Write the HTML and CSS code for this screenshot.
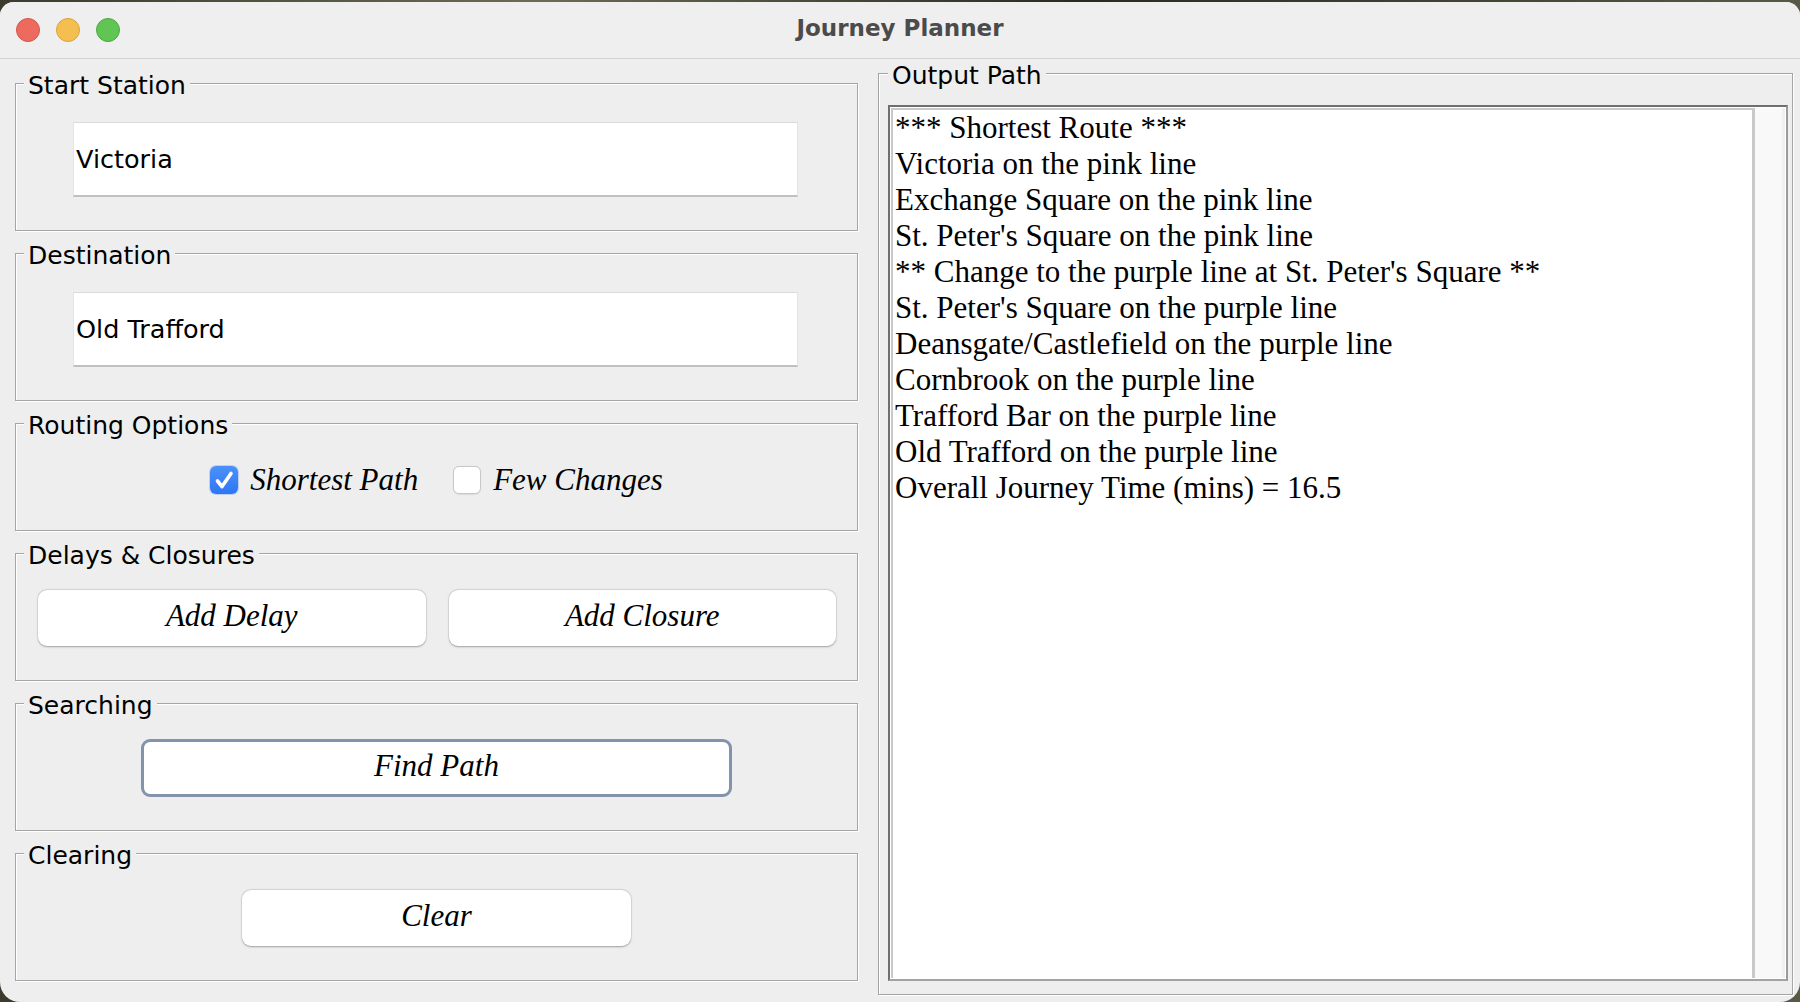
FILE: index.html
```html
<!DOCTYPE html>
<html lang="en">
<head>
<meta charset="utf-8">
<title>Journey Planner</title>
<link rel="stylesheet" href="styles.css">
</head>
<body>
<div class="window">
  <header class="titlebar">
    <div class="lights">
      <span class="light red"></span>
      <span class="light yellow"></span>
      <span class="light green"></span>
    </div>
    <div class="title">Journey Planner</div>
    <div></div>
  </header>
  <main class="content">
    <div class="left">
      <fieldset class="group">
        <legend>Start Station</legend>
        <div class="body b-input">
          <div class="field">Victoria</div>
        </div>
      </fieldset>
      <fieldset class="group">
        <legend>Destination</legend>
        <div class="body b-input">
          <div class="field">Old Trafford</div>
        </div>
      </fieldset>
      <fieldset class="group">
        <legend>Routing Options</legend>
        <div class="body b-options">
          <div class="checks">
            <label class="check">
              <span class="box checked">
                <svg viewBox="0 0 28 28" width="28" height="28"><path d="M7.5 15 L12 20.5 L21 7.5" fill="none" stroke="#fff" stroke-width="3.6" stroke-linecap="round" stroke-linejoin="round"/></svg>
              </span>
              <span class="check-label">Shortest Path</span>
            </label>
            <label class="check">
              <span class="box"></span>
              <span class="check-label">Few Changes</span>
            </label>
          </div>
        </div>
      </fieldset>
      <fieldset class="group">
        <legend>Delays &amp; Closures</legend>
        <div class="body b-delays">
          <div class="btn-grid">
            <button class="btn">Add Delay</button>
            <button class="btn">Add Closure</button>
          </div>
        </div>
      </fieldset>
      <fieldset class="group">
        <legend>Searching</legend>
        <div class="body b-search">
          <button class="btn btn-find">Find Path</button>
        </div>
      </fieldset>
      <fieldset class="group">
        <legend>Clearing</legend>
        <div class="body b-clear">
          <button class="btn btn-clear">Clear</button>
        </div>
      </fieldset>
    </div>
    <fieldset class="group g-output">
      <legend>Output Path</legend>
      <div class="body b-output">
        <div class="scroll">
          <pre class="textarea">*** Shortest Route ***
Victoria on the pink line
Exchange Square on the pink line
St. Peter's Square on the pink line
** Change to the purple line at St. Peter's Square **
St. Peter's Square on the purple line
Deansgate/Castlefield on the purple line
Cornbrook on the purple line
Trafford Bar on the purple line
Old Trafford on the purple line
Overall Journey Time (mins) = 16.5</pre>
          <div class="vbar"></div>
        </div>
      </div>
    </fieldset>
  </main>
</div>
</body>
</html>
```

FILE: styles.css
```css
html, body {
  margin: 0;
  height: 100%;
}
body {
  background: linear-gradient(90deg, #3b3a2c, #6d6a55 30%, #2b2a20 60%, #5a5846);
  overflow: hidden;
  font-family: "DejaVu Sans", sans-serif;
  color: #000;
}
.window {
  margin-top: 2px;
  height: 1000px;
  background: #eeeeee;
  border-radius: 14px 14px 20px 20px;
  overflow: hidden;
  display: flex;
  flex-direction: column;
}
.titlebar {
  height: 56px;
  flex: none;
  background: #efefef;
  border-bottom: 1px solid #d3d3d3;
  display: grid;
  grid-template-columns: 1fr auto 1fr;
  align-items: center;
}
.lights {
  display: flex;
  gap: 16px;
  padding-left: 16px;
}
.light {
  width: 24px;
  height: 24px;
  border-radius: 50%;
  box-sizing: border-box;
}
.red { background: #ed6a5e; border: 1px solid #d65549; }
.yellow { background: #f5bf4f; border: 1px solid #d9a23f; }
.green { background: #61c554; border: 1px solid #4ea843; }
.title {
  font: bold 23px "DejaVu Sans", sans-serif;
  color: #4b4b4b;
  padding-bottom: 5px;
}
.content {
  flex: 1;
  display: flex;
  gap: 20px;
  padding: 0 7px 0 15px;
}
.left {
  width: 843px;
  flex: none;
  display: flex;
  flex-direction: column;
  gap: 8px;
  padding-top: 10px;
}
.group {
  margin: 0;
  padding: 0;
  min-width: 0;
  border: 1px solid #a5a5a5;
  box-shadow: inset 1px 1px 0 #fff, 1px 1px 0 #fff;
}
.group legend {
  margin-left: 8px;
  padding: 5px 4px 0;
  font: 25px/24px "DejaVu Sans", sans-serif;
  color: #000;
  background: #eeeeee;
}
.b-input {
  padding: 24px 59px 33px 57px;
}
.field {
  height: 75px;
  box-sizing: border-box;
  background: #fff;
  border: 1px solid #e4e4e4;
  border-top-color: #dadada;
  border-bottom: 2px solid #c0c0c0;
  padding-left: 2px;
  display: flex;
  align-items: center;
  font: 25.5px "DejaVu Sans", sans-serif;
}
.b-options {
  padding: 22px 0 30px;
}
.checks {
  height: 40px;
  display: flex;
  justify-content: center;
  align-items: center;
  gap: 35px;
}
.check {
  display: flex;
  align-items: center;
  gap: 12px;
}
.box {
  width: 28px;
  height: 28px;
  box-sizing: border-box;
  border-radius: 6px;
  background: #fff;
  border: 1px solid #c8c8c8;
  box-shadow: 0 0.5px 1px rgba(0,0,0,0.08);
}
.box.checked {
  border: none;
  background: linear-gradient(#4b91fb, #2e76f3);
  box-shadow: 0 0 0 1px rgba(47,118,243,0.25);
}
.box svg { display: block; }
.check-label, .btn {
  font: italic 31px "Liberation Serif", serif;
  color: #000;
}
.b-delays {
  padding: 22px 21px 34px 22px;
}
.btn-grid {
  display: grid;
  grid-template-columns: 1fr 1fr;
  gap: 23px;
}
.btn {
  display: block;
  height: 56px;
  margin: 0;
  padding: 0 0 4px;
  background: #fff;
  border: none;
  border-radius: 9px;
  box-shadow: 0 0.5px 2px rgba(0,0,0,0.3), 0 0 0 0.5px rgba(0,0,0,0.07);
}
.b-search {
  padding: 21px 0 33px;
}
.btn-find {
  width: 591px;
  height: 58px;
  margin: 0 auto;
  border: 3px solid #8493ac;
  box-sizing: border-box;
  box-shadow: none;
}
.b-clear {
  padding: 22px 0 34px;
}
.btn-clear {
  width: 389px;
  margin: 0 auto;
}
.g-output {
  flex: 1;
  align-self: flex-start;
}
.g-output legend {
  margin-left: 9px;
}
.b-output {
  padding: 17px 4px 13px 9px;
}
.scroll {
  height: 876px;
  box-sizing: border-box;
  border: 2px solid;
  border-color: #6f6f6f #9b9b9b #a3a3a3 #6f6f6f;
  padding: 1px;
  background: #fff;
  display: flex;
}
.textarea {
  flex: 1;
  margin: 0;
  border-style: solid;
  border-color: #c9c9c9;
  border-width: 2px 3px 0 2px;
  padding: 0 0 0 2px;
  font: 31px/36.05px "Liberation Serif", serif;
  color: #000;
  white-space: pre;
  overflow: hidden;
}
.vbar {
  width: 30px;
  flex: none;
  background: #f9f9f9;
  box-shadow: inset -3px 0 0 #f0f0f0;
}
```
